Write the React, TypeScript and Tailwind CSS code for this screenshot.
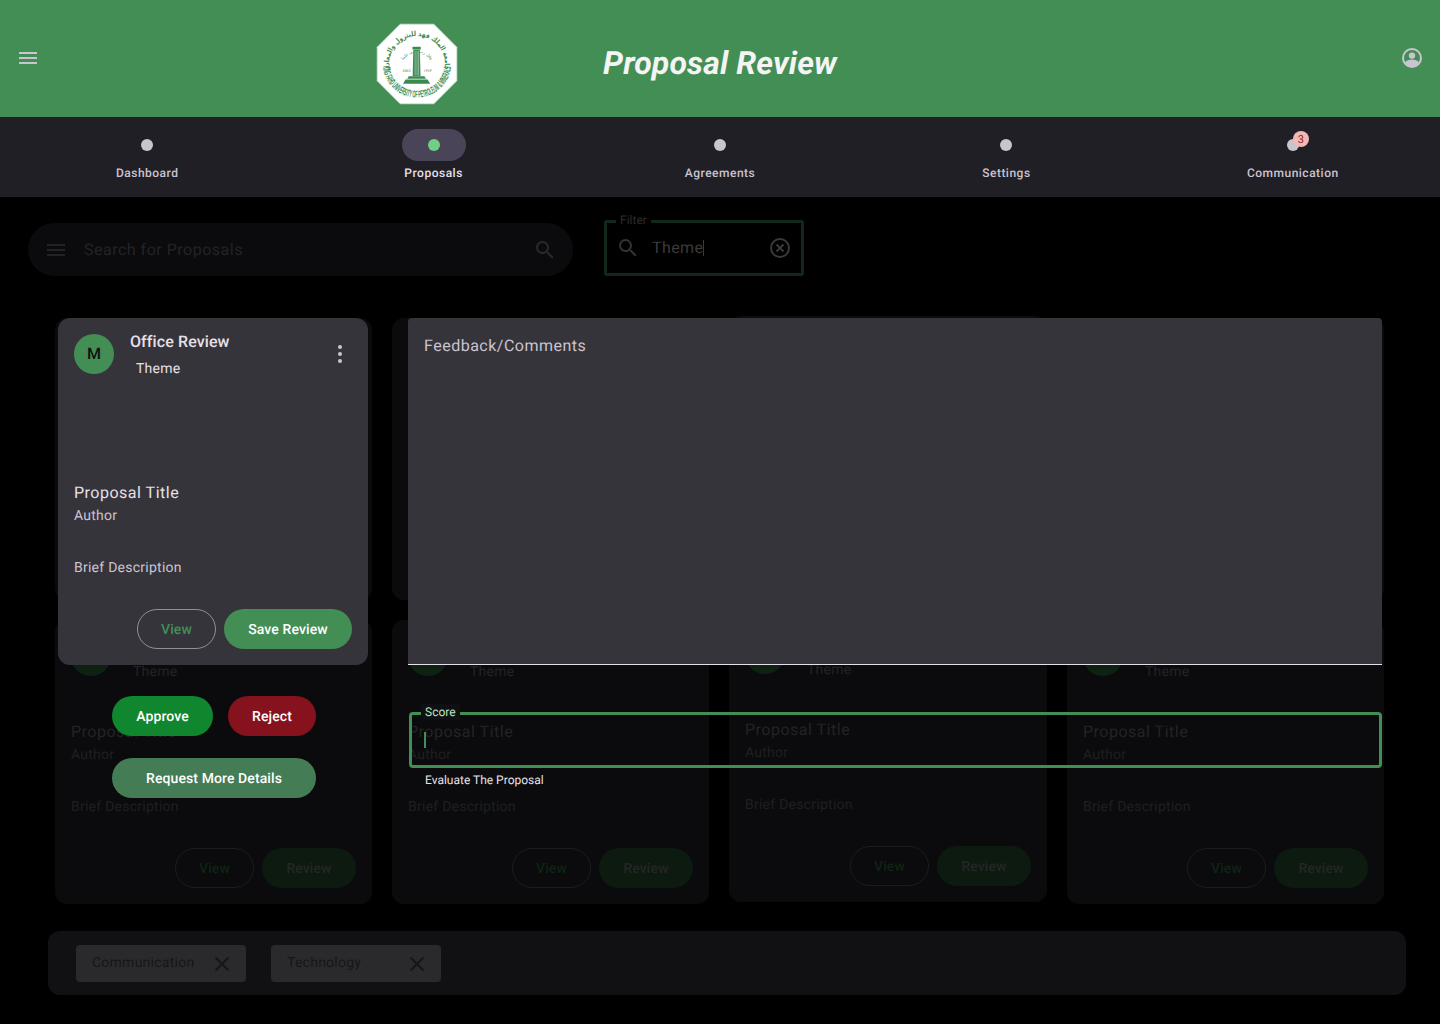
import React from "react";

const font = { fontFamily: "Roboto, 'Liberation Sans', sans-serif" };

function MenuIcon({ className }: { className: string }) {
  return (
    <svg viewBox="0 0 24 24" className={className} fill="currentColor">
      <path d="M3 18h18v-2H3v2zm0-5h18v-2H3v2zm0-7v2h18V6H3z" />
    </svg>
  );
}

function SearchIcon({ className }: { className: string }) {
  return (
    <svg viewBox="0 0 24 24" className={className} fill="currentColor">
      <path d="M15.5 14h-.79l-.28-.27A6.47 6.47 0 0 0 16 9.5 6.5 6.5 0 1 0 9.5 16c1.61 0 3.09-.59 4.23-1.57l.27.28v.79l5 4.99L20.49 19l-4.99-5zm-6 0C7.01 14 5 11.99 5 9.5S7.01 5 9.5 5 14 7.01 14 9.5 11.99 14 9.5 14z" />
    </svg>
  );
}

function Logo() {
  return (
    <svg viewBox="0 0 100 100" className="h-[82px] w-[82px]">
      <defs>
        <path id="arcTop" d="M 17 58 A 34 34 0 1 1 83 58" />
        <path id="arcBottom" d="M 8.2 53 A 42 42 0 0 0 91.8 53" />
        <path id="arcInner" d="M 30 52 A 20.5 20.5 0 0 1 70 52" />
      </defs>
      <polygon points="29.5,1.5 70.5,1.5 98.5,29.5 98.5,70.5 70.5,98.5 29.5,98.5 1.5,70.5 1.5,29.5" fill="#ffffff" stroke="#d7e6da" strokeWidth="1" />
      <text fontFamily="'DejaVu Sans', sans-serif" fontSize="8.5" fontWeight="700" fill="#3a8a50">
        <textPath href="#arcTop" textLength="122" lengthAdjust="spacingAndGlyphs">جامعة الملك فهد للبترول والمعادن</textPath>
      </text>
      <text fontFamily="'DejaVu Sans', sans-serif" fontSize="5" fill="#3a8a50">
        <textPath href="#arcInner" startOffset="50%" textAnchor="middle">وقل رب زدني علما</textPath>
      </text>
      <text fontFamily="'Liberation Sans', sans-serif" fontSize="12" fontWeight="700" fill="#3a8a50">
        <textPath href="#arcBottom" textLength="123" lengthAdjust="spacingAndGlyphs">KING FAHD UNIVERSITY OF PETROLEUM &amp; MINERALS</textPath>
      </text>
      <rect x="44.5" y="29" width="10" height="3.5" fill="#3a8a50" />
      <path d="M45.5 33h8l.8 32h-9.6z" fill="#3a8a50" />
      <path d="M47.7 34v30M50 34v30M52 34v30" stroke="#ffffff" strokeWidth="0.5" />
      <path d="M40 65h19l2 3H38z" fill="#3a8a50" />
      <path d="M36 69h27l3 5H33z" fill="#3a8a50" />
      <text x="37" y="60" fontFamily="'Liberation Sans', sans-serif" fontSize="4.6" textAnchor="middle" fill="#3a8a50">1963</text>
      <text x="63" y="60" fontFamily="'DejaVu Sans', sans-serif" fontSize="4.6" textAnchor="middle" fill="#3a8a50">١٣٨٣</text>
    </svg>
  );
}

const tabs = ["Dashboard", "Proposals", "Agreements", "Settings", "Communication"];

function Tab({ label }: { label: string }) {
  const active = label === "Proposals";
  return (
    <div className="flex flex-col items-center pt-3">
      <div className={`relative flex h-8 w-16 items-center justify-center rounded-2xl ${active ? "bg-[#4a4458]" : ""}`}>
        <div className={`h-3 w-3 rounded-full ${active ? "bg-[#6fcf85]" : "bg-[#cac4d0]"}`} />
        {label === "Communication" && (
          <span className="absolute left-[32px] top-[2px] flex h-4 w-4 items-center justify-center rounded-full bg-[#f2b8b5] text-[11px] leading-none text-[#8c1d18]">
            3
          </span>
        )}
      </div>
      <span className={`mt-1 text-xs leading-4 font-[480] tracking-[0.5px] ${active ? "text-[#e6e0e9]" : "text-[#cac4d0]"}`}>{label}</span>
    </div>
  );
}

function DimCard({ shift }: { shift?: boolean }) {
  return (
    <div className={`flex flex-col rounded-xl bg-[#0b0b0d] ${shift ? "-mt-0.5 mb-0.5" : ""}`}>
      <div className="flex px-4 pt-3">
        <div className="mt-1 h-10 w-10 shrink-0 rounded-full bg-[#0d2212]" />
        <div className="ml-4">
          <div className="text-base leading-6 font-medium tracking-[0.1px] text-[#232325]">Office Review</div>
          <div className="mt-1.5 pl-[6px] text-sm leading-5 tracking-[0.25px] text-[#232325]">Theme</div>
        </div>
      </div>
      <div className="mt-[38px] px-4 text-base leading-6 tracking-[0.5px] text-[#232325]">Proposal Title</div>
      <div className="mt-px px-4 text-sm leading-5 tracking-[0.25px] text-[#1f1f21]">Author</div>
      <div className="mt-8 px-4 text-sm leading-5 tracking-[0.25px] text-[#1f1f21]">Brief Description</div>
      <div className="mt-[31px] flex justify-end gap-2 px-4">
        <div className="flex h-10 w-[79px] items-center justify-center rounded-full border border-[#1c1c1e] pt-0.5 text-sm font-medium tracking-[0.1px] text-[#0f2414]">View</div>
        <div className="flex h-10 w-[94px] items-center justify-center rounded-full bg-[#0d1a10] pt-0.5 text-sm font-medium tracking-[0.1px] text-[#242625]">Review</div>
      </div>
    </div>
  );
}

export default function App() {
  return (
    <div className="relative h-[1024px] w-[1440px] overflow-hidden bg-black [text-rendering:geometricPrecision]" style={font}>
      <header className="relative flex h-[117px] items-start bg-[#438e55]">
        <MenuIcon className="ml-4 mt-[46px] h-6 w-6 text-[#cac4d0]" />
        <div className="absolute left-[376px] top-[23px]"><Logo /></div>
        <h1 className="absolute left-0 right-0 top-[43px] text-center text-[32px] leading-10 font-bold tracking-[0.13px] italic text-[#f4f4f4]">Proposal Review</h1>
        <svg viewBox="0 0 20 20" className="absolute left-[1402px] top-[48px] h-5 w-5">
          <circle cx="10" cy="10" r="9" fill="none" stroke="#cac4d0" strokeWidth="2" />
          <circle cx="10" cy="7.6" r="3.2" fill="#cac4d0" />
          <path d="M2.8 14.8c1.6-2.2 4.4-3.2 7.2-3.2s5.6 1 7.2 3.2c-1.6 2.4-4.2 4.2-7.2 4.2s-5.6-1.8-7.2-4.2z" fill="#cac4d0" />
        </svg>
      </header>

      <nav className="grid h-20 grid-cols-5 bg-[#211f26] px-1">
        {tabs.map((t) => <Tab key={t} label={t} />)}
      </nav>

      <div className="ml-7 mt-[23px] flex items-end gap-[31px]">
        <div className="flex h-[53px] w-[545px] items-center rounded-full bg-[#0b0b0e] pl-4 pr-4">
          <MenuIcon className="h-6 w-6 text-[#232325]" />
          <span className="ml-4 flex-1 text-base tracking-[0.5px] text-[#232325]">Search for Proposals</span>
          <SearchIcon className="h-6 w-6 text-[#2a2a2c]" />
        </div>
        <div className="relative flex h-[56px] w-[200px] items-center rounded-[3px] border-[3px] border-[#10291a] pl-[9px] pr-[9px]">
          <span className="absolute left-[9px] top-[-11px] bg-black px-1 text-xs leading-4 text-[#2c2c2e]">Filter</span>
          <SearchIcon className="h-6 w-6 text-[#333335]" />
          <span className="ml-[12px] flex-1 text-base tracking-[0.4px] text-[#3a3a3c]">Theme<span className="inline-block h-4 w-px translate-y-[3px] bg-[#3a3a3c]" /></span>
          <svg viewBox="0 0 24 24" className="h-6 w-6 text-[#3a3a3c]" fill="none" stroke="currentColor" strokeWidth="2">
            <circle cx="12" cy="12" r="9" />
            <path d="M8.5 8.5l7 7M15.5 8.5l-7 7" />
          </svg>
        </div>
      </div>

      <div className="ml-[55px] mt-[42px] grid w-[1329px] grid-cols-[317px_317px_318px_317px] grid-rows-[282px_284px] gap-5">
        {[0, 1, 2, 3, 4, 5, 6, 7].map((i) => <DimCard key={i} shift={i % 4 === 2} />)}
      </div>

      <div className="ml-[48px] mt-[27px] flex h-16 w-[1358px] items-start gap-[25px] rounded-xl bg-[#111113] pl-7 pt-[14px]">
        {["Communication", "Technology"].map((c) => (
          <div key={c} className="flex h-[37px] w-[170px] items-center justify-between rounded bg-[#2a2a2c] pl-4 pr-3">
            <span className="pb-0.5 text-sm tracking-[0.25px] text-[#161618]">{c}</span>
            <svg viewBox="0 0 24 24" className="h-6 w-6 text-[#161618]" fill="none" stroke="currentColor" strokeWidth="2">
              <path d="M5.5 5.5l13 13M18.5 5.5l-13 13" />
            </svg>
          </div>
        ))}
      </div>

      {/* Review card lying over the dimmed page */}
      <div className="absolute left-[58px] top-[318px] flex h-[347px] w-[310px] flex-col rounded-xl bg-[#36343b]">
        <div className="flex px-4 pt-3">
          <div className="mt-1 flex h-10 w-10 shrink-0 items-center justify-center rounded-full bg-[#438e55] text-base font-medium text-[#111]">M</div>
          <div className="ml-4 flex-1">
            <div className="text-base leading-6 font-medium tracking-[0.1px] text-[#e6e0e9]">Office Review</div>
            <div className="mt-[5px] pl-[6px] text-sm leading-5 tracking-[0.25px] text-[#e6e0e9]">Theme</div>
          </div>
          <svg viewBox="0 0 24 24" className="mt-3 h-6 w-6 text-[#cac4d0]" fill="currentColor">
            <circle cx="12" cy="5" r="2" />
            <circle cx="12" cy="12" r="2" />
            <circle cx="12" cy="19" r="2" />
          </svg>
        </div>
        <div className="mt-[102px] px-4 text-base leading-6 tracking-[0.5px] text-[#e6e0e9]">Proposal Title</div>
        <div className="mt-px px-4 text-sm leading-5 tracking-[0.25px] text-[#cac4d0]">Author</div>
        <div className="mt-8 px-4 text-sm leading-5 tracking-[0.25px] text-[#cac4d0]">Brief Description</div>
        <div className="mt-[31px] flex justify-end gap-2 pr-4">
          <div className="flex h-10 w-[79px] items-center justify-center rounded-full border border-[#938f99] pt-0.5 text-sm font-medium tracking-[0.1px] text-[#438e55]">View</div>
          <div className="flex h-10 w-[128px] items-center justify-center rounded-full bg-[#438e55] pt-0.5 text-sm font-medium tracking-[0.1px] text-white">Save Review</div>
        </div>
      </div>

      <div className="absolute left-[408px] top-[318px] h-[347px] w-[974px] rounded-t border-b border-[#e6e0e9] bg-[#36343b] px-4 pt-4">
        <span className="text-base leading-6 tracking-[0.5px] text-[#cac4d0]">Feedback/Comments</span>
      </div>

      <div className="absolute left-[112px] top-[696px] flex w-[204px] flex-wrap justify-between gap-y-[22px] text-sm font-medium tracking-[0.1px] text-white">
        <div className="flex h-10 w-[101px] items-center justify-center rounded-full bg-[#10862e] pt-0.5">Approve</div>
        <div className="flex h-10 w-[88px] items-center justify-center rounded-full bg-[#85121c] pt-0.5">Reject</div>
        <div className="flex h-10 w-[204px] items-center justify-center rounded-full bg-[#437c55] pt-0.5">Request More Details</div>
      </div>

      <div className="absolute left-[409px] top-[712px] w-[973px]">
        <div className="relative h-14 rounded border-[3px] border-[#438e55]">
          <span className="absolute left-[9px] top-[-11px] bg-[#101014] px-1 text-xs leading-4 text-[#b6e3c0]">Score</span>
          <span className="absolute left-[12px] top-[17px] h-4 w-0.5 bg-[#438e55]" />
        </div>
        <div className="mt-1 pl-4 text-xs leading-4 text-[#e6e0e9]">Evaluate The Proposal</div>
      </div>
    </div>
  );
}
